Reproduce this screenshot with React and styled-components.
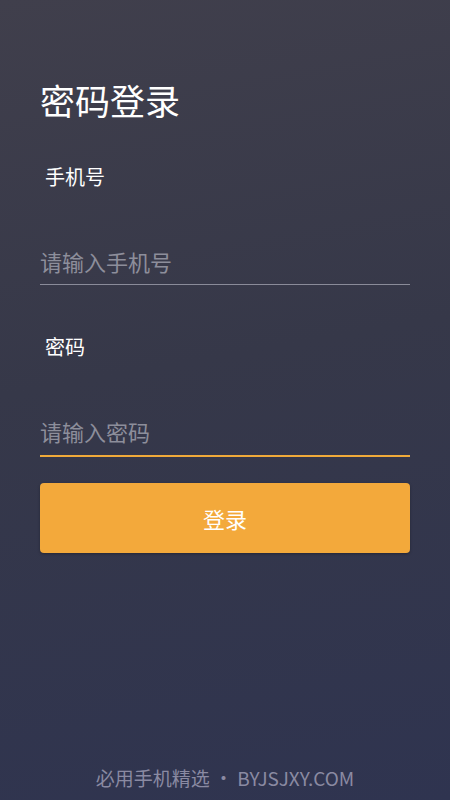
import styled, { createGlobalStyle } from "styled-components";

const GlobalStyle = createGlobalStyle`
  html, body {
    margin: 0;
    padding: 0;
  }
  body {
    font-family: "Noto Sans CJK SC", "Noto Sans", sans-serif;
  }
  * {
    box-sizing: border-box;
  }
`;

function App() {
  return (
    <>
      <GlobalStyle />
      <Screen>
        <Title>密码登录</Title>
        <Label>手机号</Label>
        <Input placeholder="请输入手机号" />
        <Label>密码</Label>
        <Input type="password" placeholder="请输入密码" $active />
        <Button>登录</Button>
        <Footer>必用手机精选 • BYJSJXY.COM</Footer>
      </Screen>
    </>
  );
}

const Screen = styled.div`
  width: 450px;
  height: 800px;
  padding: 80px 40px 10px;
  display: flex;
  flex-direction: column;
  background: linear-gradient(170deg, #403f4c 0%, #363849 45%, #2f3450 100%);
  overflow: hidden;
`;

const Title = styled.h1`
  margin: 0;
  font-size: 35px;
  line-height: 40px;
  font-weight: 400;
  color: #ffffff;
`;

const Label = styled.div`
  margin-top: 45px;
  padding-left: 5px;
  font-size: 20px;
  line-height: 24px;
  color: #ffffff;

  & + input + & {
    margin-top: 50px;
  }
`;

const Input = styled.input`
  display: block;
  width: 100%;
  height: ${(p) => (p.$active ? "44px" : "42px")};
  margin-top: 54px;
  padding: 0 0 6px;
  border: none;
  border-bottom: ${(p) => (p.$active ? "2px solid #f0aa3a" : "1px solid #8a8b99")};
  background: transparent;
  outline: none;
  font-family: inherit;
  font-size: 22px;
  color: #ffffff;

  &::placeholder {
    color: #8d8e9b;
  }
`;

const Button = styled.button`
  margin-top: 26px;
  height: 70px;
  width: 100%;
  border: none;
  border-radius: 4px;
  background: #f3a93b;
  box-shadow: 0 1px 3px rgba(0, 0, 0, 0.3);
  font-family: inherit;
  font-size: 22px;
  color: #ffffff;
  cursor: pointer;
`;

const Footer = styled.div`
  margin-top: auto;
  text-align: center;
  font-size: 19px;
  line-height: 24px;
  color: #8a8aa2;
`;

export default App;
